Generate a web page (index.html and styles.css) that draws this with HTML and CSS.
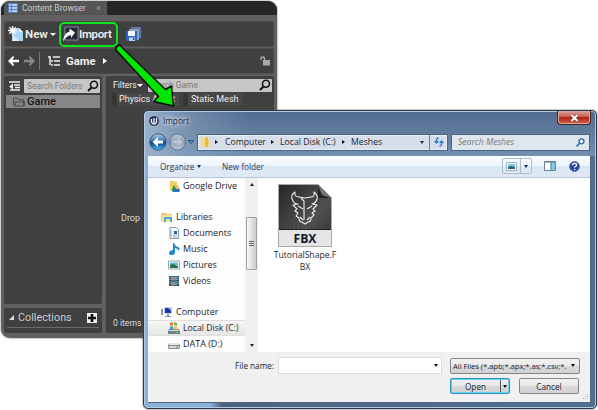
FILE: index.html
```html
<!DOCTYPE html>
<html lang="en">
<head>
<meta charset="utf-8">
<title>Import</title>
<link rel="stylesheet" href="styles.css">
</head>
<body>
<main class="desktop">
<section class="browser">
  <header class="tabs"><div class="tab">
    <svg width="10" height="10" viewBox="0 0 10 10"><path fill="#527fc5" d="M0 0h10v10H0z"/><path d="M1 2h2M4 2h5M1 5h2M4 5h5M1 8h2M4 8h5" stroke="#d8e8ff" stroke-width="1.400"/></svg>
    <span class="tab-name">Content Browser</span><span class="tab-x">×</span></div></header>
  <div class="bar tools">
    <svg width="16" height="16" viewBox="0 0 16 16"><path d="M4 2h7l4 4v9H4z" fill="#a9d5f5"/><path d="M11 2v4h4z" fill="#e9f7ff"/><path d="M5 15V9l6 6z" fill="#dff1ff"/><path d="M4.500 0v9M0 4.500h9M1.300 1.300l6.400 6.400M7.700 1.300L1.300 7.700" stroke="#fff" stroke-width="1.300"/></svg>
    <b class="new">New</b><i class="tri down"></i>
    <div class="import">
      <svg width="16" height="16" viewBox="0 0 16 16"><path d="M2 1h13v13H2z" fill="#25262f" stroke="#8087b1"/><path d="M0 15.500C.8 9.500 3 6.500 6.500 5.500V2.500L12 6.500l-4 5.500V9C4.500 9.500 2 12 0 15.500z" fill="#fff"/></svg>
      <b>Import</b></div>
    <svg class="save" width="17" height="17" viewBox="0 0 17 17"><path d="M6 1h10v11h-3V5H6z" fill="#65779f"/><path d="M4 3h10v11h-2V6H4z" fill="#8b9dc1"/><path d="M1 5h11v10H2l-1-1z" fill="#2f66bd"/><path d="M3 5h7v5H3z" fill="#f4f8ff"/><path d="M4 11.500h6V15H4z" fill="#c1d2ed"/><path d="M8 12h1.300v2H8z" fill="#234576"/></svg>
  </div>
  <div class="bar nav">
    <svg width="11" height="10" viewBox="0 0 11 10"><path d="M0 5l5-5 1.200 1L4.500 3.700H11v2.600H4.500L6.200 9 5 10z" fill="#fff"/></svg>
    <svg class="fwd" width="11" height="10" viewBox="0 0 11 10"><path d="M11 5L6 0 4.800 1l1.700 2.700H0v2.600h6.500L4.800 9 6 10z" fill="#888"/></svg>
    <i class="rule"></i>
    <svg class="tree" width="12" height="10" viewBox="0 0 12 10"><path d="M0 1h3M5 1h7M2 1v8M3 5h2M6 5h6M3 9h2M6 9h6" fill="none" stroke="#eee" stroke-width="1.500"/></svg>
    <b class="path">Game</b><i class="tri right"></i>
    <svg class="lock" width="11" height="10" viewBox="0 0 11 10"><path d="M3 4h7v5.500H3z" fill="#aaa"/><path d="M4.500 4V2.500Q4.500 1 2.700 1T1 2.500V4" fill="none" stroke="#aaa" stroke-width="1.400"/></svg>
  </div>
  <div class="split">
    <div class="left">
      <div class="sources">
        <div class="search-row">
          <svg width="11" height="10" viewBox="0 0 11 10"><path d="M0 1h11M5 4h6M6 6.500h5M1 9h10" stroke="#eee" stroke-width="1.500"/><path d="M4 2.500v6L0 5.500z" fill="#eee"/></svg>
          <div class="search"><span>Search Folders</span><svg width="12" height="12" viewBox="0 0 12 12"><circle cx="7" cy="4.700" r="3.500" fill="none" stroke="#111" stroke-width="1.600"/><path d="M4.500 7.500L1 11" stroke="#111" stroke-width="2"/></svg></div>
        </div>
        <div class="folder"><svg width="12" height="10" viewBox="0 0 12 10"><path d="M.6 8V1.200h4l1 1.500h5V9H1.500zM2 9V5h9.400v4" fill="none" stroke="#444" stroke-width=".9"/></svg><b>Game</b></div>
      </div>
      <div class="collections"><div class="coll-head"><i class="corner"></i><span>Collections</span><svg width="10" height="10" viewBox="0 0 10 10"><path d="M0 0h10v10H0z" fill="#eee"/><path d="M5 1v8M1 5h8" stroke="#111" stroke-width="2.600"/></svg></div></div>
    </div>
    <div class="assets">
      <div class="filter-row"><span class="filters">Filters</span><i class="tri down"></i>
        <div class="search"><span>Search Game</span><svg width="12" height="12" viewBox="0 0 12 12"><circle cx="7" cy="4.700" r="3.500" fill="none" stroke="#111" stroke-width="1.600"/><path d="M4.500 7.500L1 11" stroke="#111" stroke-width="2"/></svg></div></div>
      <div class="chips"><span class="chip phys">Physics Asset</span><span class="chip">Static Mesh</span></div>
      <div class="drop">Drop</div>
      <div class="items">0 items</div>
    </div>
  </div>
</section>

<svg class="arrow" width="80" height="75" viewBox="110 38 80 75"><path d="M119.500 45L165.500 89.500 171.500 86 173.500 106 153.500 101.500 158.500 96.500 115.500 49.500Q116 46 119.500 45z" fill="#00e600" stroke="#071007" stroke-width="1.500" stroke-linejoin="round"/></svg>

<section class="dialog">
  <header class="title">
    <svg width="10" height="10" viewBox="0 0 10 10"><circle cx="5" cy="5" r="4.800" fill="#1b2952"/><path d="M2.500 3v3Q3 8 5 8t2.500-2V2M5 2v5" fill="none" stroke="#fff" stroke-width="1.300"/></svg>
    <span>Import</span>
    <div class="close"><svg width="9" height="8" viewBox="0 0 9 8"><path d="M1.500 1l6 6M7.500 1l-6 6" stroke="#5b3333" stroke-width="3.200"/><path d="M1.500 1l6 6M7.500 1l-6 6" stroke="#fff" stroke-width="2"/></svg></div>
  </header>
  <div class="address-row">
    <svg class="back" width="46" height="18" viewBox="0 0 46 18"><defs><linearGradient id="blue" x2="0" y2="1"><stop stop-color="#b7d8f0"/><stop offset=".48" stop-color="#2763a8"/><stop offset=".55" stop-color="#0b438e"/><stop offset="1" stop-color="#4cc4f4"/></linearGradient><linearGradient id="grey" x2="0" y2="1"><stop stop-color="#c2ccd8"/><stop offset=".5" stop-color="#8d9eb2"/><stop offset="1" stop-color="#bdcad8"/></linearGradient></defs><circle cx="9" cy="9" r="8.200" fill="url(#blue)" stroke="#3b5878"/><path d="M3.500 9L9 4v3.500h5v3H9V14z" fill="#fff"/><circle cx="28.500" cy="9" r="8" fill="url(#grey)" stroke="#60738a"/><path d="M34 9l-5.500-4.500v3h-5v3h5v3z" fill="#b9c5d1"/><path d="M39.500 7.500h5L42 10.500z" fill="#42a2dc" stroke="#164774" stroke-width=".8"/></svg>
    <div class="address">
      <svg width="11" height="12" viewBox="0 0 11 12"><path d="M1 1h5v10H1z" fill="#f8dc80"/><path d="M5 2l3-1v10H5z" fill="#e3b84e"/><path d="M8 3h2v8H8z" fill="#f4d983"/></svg>
      <i class="crumb c1"></i><span class="t-comp">Computer</span><i class="crumb c2"></i><span class="t-local">Local Disk (C:)</span><i class="crumb c3"></i><span class="t-mesh">Meshes</span><i class="small-down"></i>
      <div class="refresh"><svg width="10" height="10" viewBox="0 0 10 10"><path d="M4.500 1Q2 1 2.500 5M5.500 9Q8 9 7.500 5" fill="none" stroke="#2574c8" stroke-width="1.400"/><path d="M0 4h5L2.500 7zM5 6h5L7.500 3z" fill="#2574c8"/></svg></div>
    </div>
    <div class="find"><em>Search Meshes</em><svg width="9" height="9" viewBox="0 0 9 9"><circle cx="5.500" cy="3.300" r="2.500" fill="#e7f3ff" stroke="#2869b0" stroke-width="1.300"/><path d="M3.700 5.200L.5 8.500" stroke="#2869b0" stroke-width="1.600"/></svg></div>
  </div>
  <div class="content">
    <div class="commands"><span class="org">Organize</span><i class="small-down"></i><span class="newf">New folder</span>
      <div class="view"><div><svg width="11" height="9" viewBox="0 0 11 9"><path d="M.5.5h10v8H.5z" fill="#fff" stroke="#a4b3c0"/><path d="M2 2h7v3H2z" fill="#80c4ed"/><path d="M2 5l3-1 4 1v2H2z" fill="#286c6a"/></svg></div><div class="view-more"><i class="small-down"></i></div></div>
      <svg class="pane" width="12" height="10" viewBox="0 0 12 10"><path d="M.5.5h11v9H.5z" fill="#fff" stroke="#6d8193"/><path d="M7 1h4v8H7z" fill="#7bcae8"/><path d="M1 1h10M7 1v8" stroke="#5d7890"/></svg>
      <svg class="help" width="11" height="11" viewBox="0 0 11 11"><circle cx="5.500" cy="5.500" r="5" fill="#2545a7" stroke="#717d99"/><path d="M3.600 4.200q0-1.900 2-1.900t2 1.600q0 .9-1.100 1.400t-.9 1.400M5.600 7.700V9" fill="none" stroke="#fff" stroke-width="1.300"/></svg>
    </div>
    <div class="body">
      <nav class="places">
        <div class="place sub"><svg viewBox="0 0 12 12"><path d="M2 1h4l1 1h2v9H2z" fill="#f2cf65"/><path d="M6 5h3l3 5-1 2H5L4 10z" fill="#2670d0"/><path d="M6 5l2 3-3 4-1-2z" fill="#249447"/><path d="M6 5h3l2 4H8z" fill="#f4c536"/></svg><span>Google Drive</span></div>
        <div class="place"></div>
        <div class="place"><svg viewBox="0 0 12 12"><path d="M0 2h5l1 1h5v7H0z" fill="#eccb6b"/><path d="M1 4h10v7H1z" fill="#f8e198"/><path d="M3 11V6h8v5H9V8H5v3z" fill="#4ba5d5"/></svg><span>Libraries</span></div>
        <div class="place sub"><svg viewBox="0 0 12 12"><path d="M2 .5h6L10.500 3v8.500H2z" fill="#f5f8fb" stroke="#8b9da9"/><path d="M3 3v7M5 8h4M5 10h4" stroke="#91adc1"/><path d="M6 4h3v3H6z" fill="#2b65a5"/></svg><span>Documents</span></div>
        <div class="place sub"><svg viewBox="0 0 12 12"><path d="M6 0q1 3 4 4t0 4q1-2-3-3v4q0 3-3 3t-3-2 3-3h1V0z" fill="#2388cb"/></svg><span>Music</span></div>
        <div class="place sub"><svg viewBox="0 0 12 12"><path d="M.5 2h11v8H.5z" fill="#fff" stroke="#96a5ac"/><path d="M2 3.500h8V6H2z" fill="#5cbae8"/><path d="M2 6l3-1 5 2v2H2z" fill="#257348"/></svg><span>Pictures</span></div>
        <div class="place sub"><svg viewBox="0 0 12 12"><path d="M1 1h10v10H1z" fill="#35424d"/><path d="M3 1.500h6v4H3zM3 6.500h6v4H3z" fill="#55a5cc"/><path d="M4 4l2-2 2 3zM4 9l3-2 2 3z" fill="#c97855"/><path d="M2 2v8M10 2v8" stroke="#ddd" stroke-dasharray="1 1"/></svg><span>Videos</span></div>
        <div class="place"></div>
        <div class="place"><svg viewBox="0 0 12 12"><path d="M0 3h2v6H0z" fill="#8b98ae"/><path d="M3 1h8v7H3z" fill="#d0d8e7"/><path d="M4 2h6v5H4z" fill="#202eb5"/><path d="M7 2h3v3z" fill="#6bade7"/><path d="M6 8h2v2H6zM4 10h6v1H4z" fill="#8998ac"/></svg><span>Computer</span></div>
        <div class="place sub selected"><svg viewBox="0 0 12 12"><path d="M1 7h9l2 2v3H0V9z" fill="#6e818a"/><path d="M1 8h9l1 1H0z" fill="#d6e0e2"/><path d="M2 1l3-1v3L2 4z" fill="#e27039"/><path d="M6 0l3 1v3L6 3z" fill="#78b941"/><path d="M2 5l3-1v3L2 8z" fill="#3d8ed6"/><path d="M6 4l3 1v3L6 7z" fill="#efbe3a"/><path d="M8 10h2v1H8z" fill="#60e55c"/></svg><span class="tight">Local Disk (C:)</span></div>
        <div class="place sub"><svg viewBox="0 0 12 12"><path d="M2 5h8l2 2v3l-1 1H1l-1-1V7z" fill="#8a8f91"/><path d="M2 5h8l1 2H1z" fill="#e5e8e8"/><path d="M1 8h10v2H1z" fill="#d7dada"/><path d="M8 8.500h2v1H8z" fill="#46a63b"/></svg><span>DATA (D:)</span></div>
      </nav>
      <div class="scroll"><i class="s-up"></i><div class="thumb"><i></i><i></i><i></i></div><i class="small-down s-down"></i></div>
      <div class="files"><div class="file">
        <svg width="54" height="63" viewBox="0 0 54 63"><defs><linearGradient id="page" x2="1" y2="1"><stop stop-color="#272727"/><stop offset=".6" stop-color="#505050"/><stop offset="1" stop-color="#303030"/></linearGradient></defs><path d="M.5.500H40L53.500 14V62.500H.5z" fill="url(#page)" stroke="#a9a9a9"/><path d="M40 1v13h13z" fill="#262626"/><path d="M40 1l13 13-9-3z" fill="#777"/><path d="M1 46h52v16H1z" fill="#e5e5e5"/><path d="M1 45.500h52" stroke="#111" stroke-dasharray="3 1"/><path d="M17 8Q12 11 14.500 16T20 20L15 21 19 25 17 27 20 29 18 32 21 34Q21 38 24 38L27 40 30 38Q33 38 33 34L36 31 34 29 37 27 35 25 39 21 34 20Q38 19 39 15T36 8Q37 13 33 13L27 14 21 13Q16 13 17 8zM23 14L26 17V36M20 22L25 25M34 22L29 25M22 33L25 36M32 33L29 36" fill="none" stroke="#eee" stroke-width="1.100" stroke-linejoin="round"/><text x="27" y="58.500" text-anchor="middle" textLength="23" lengthAdjust="spacingAndGlyphs" class="fbx">FBX</text></svg>
        <span class="f1">TutorialShape.F</span><span class="f2">BX</span></div></div>
    </div>
    <div class="footer">
      <div class="name-row"><span class="label">File name:</span><div class="name"><i class="small-down"></i></div><div class="button types"><span>All Files (*.apb;*.apx;*.as;*.csv;*.</span><i class="small-down"></i></div></div>
      <div class="button-row"><div class="button open"><span>Open</span><div class="open-more"><i class="small-down"></i></div></div><div class="button cancel"><span>Cancel</span></div></div>
      <svg class="grip" width="7" height="7" viewBox="0 0 7 7"><path d="M5 0h1v1H5zM3 2h1v1H3zM5 2h1v1H5zM1 4h1v1H1zM3 4h1v1H3zM5 4h1v1H5z" fill="#b2b2b2"/></svg>
    </div>
  </div>
</section>
</main>
</body>
</html>
```
FILE: styles.css
```css
* { box-sizing: border-box; }
body { margin: 0; background: #fff; font-family: "Open Sans", sans-serif; font-size: 9px; color: #222; }
.desktop { position: relative; width: 598px; height: 410px; overflow: hidden; }
svg { display: block; flex: none; }
span, b, em { white-space: nowrap; }
i { flex: none; }

/* Content browser */
.browser { position: absolute; left: 1px; top: 1px; width: 276px; height: 337px; padding: 0 3px 5px; display: flex; flex-direction: column; background: #606060; border-radius: 9px; overflow: hidden; box-shadow: 0 0 2px #555; color: #eee; font-family: Roboto, sans-serif; }
.tabs { height: 14px; margin: 0 -3px; padding-left: 3px; background: #262626; flex: none; }
.tab { width: 103px; height: 14px; background: #555; display: flex; align-items: center; padding-left: 4px; }
.tab-name { margin-left: 4px; width: 74px; font-size: 8.6px; color: #ccc; }
.tab-x { color: #999; font-size: 9px; }
.bar { background: #404040; border: 1px solid #4c4c4c; border-radius: 2px; display: flex; align-items: center; flex: none; }
.tools { height: 26px; margin-top: 6px; padding-left: 3px; }
.new { font-size: 11.5px; font-weight: 600; margin-left: 1px; width: 25px; }
.tri { width: 0; height: 0; border: 3px solid transparent; }
.tri.down { border-top-color: #fff; border-bottom: 0; }
.tri.right { border-left: 4px solid #fff; border-right: 0; }
.import { height: 25px; width: 59px; flex: none; margin-left: 3px; padding-left: 2px; border: 2px solid #0ce61c; border-radius: 5px; box-shadow: 0 0 1px #000; display: flex; align-items: center; gap: 0; }
.import b { font-size: 11.5px; font-weight: 600; letter-spacing: -.35px; }
.save { margin-left: 7px; }
.nav { height: 26px; margin-top: 1px; padding: 0 2px 0 3px; }
.fwd { margin-left: 5px; }
.rule { width: 1px; height: 18px; background: #777; margin-left: 4px; }
.tree { margin-left: 8px; }
.path { font-size: 11.3px; margin-left: 6px; width: 37px; }
.lock { margin-left: auto; }
.split { flex: 1; min-height: 0; margin-top: 2px; display: flex; gap: 4px; }
.left { width: 98px; display: flex; flex-direction: column; gap: 4px; }
.sources { flex: 1; background: #404040; border-radius: 2px; padding: 2px; }
.search-row { display: flex; align-items: center; gap: 4px; padding-left: 3px; height: 16px; }
.search { height: 14px; flex: 1; background: #c6c6c6; border-radius: 1px; display: flex; align-items: center; justify-content: space-between; padding: 0 1px 0 3px; color: #7b7b7b; font-size: 8.4px; }
.folder { height: 13px; margin-top: 1px; background: #868686; color: #161616; display: flex; align-items: center; padding-left: 7px; gap: 2px; font-size: 11px; }
.folder b { font-weight: 500; }
.collections { height: 25px; background: #404040; border-radius: 2px; padding: 0 3px; }
.coll-head { height: 20px; border-bottom: 1px solid #6b6b6b; display: flex; align-items: center; font-size: 10.8px; color: #ccc; }
.corner { width: 0; height: 0; border-left: 5px solid transparent; border-bottom: 5px solid #ddd; margin: 0 4px 0 2px; }
.coll-head svg { margin: 1px 2px 0 auto; }
.assets { flex: 1; background: #404040; border-radius: 2px; padding: 2px; display: flex; flex-direction: column; }
.filter-row { height: 14px; display: flex; align-items: center; padding-left: 5px; }
.filters { font-size: 8.6px; width: 24px; }
.filter-row .search { margin-left: 5px; height: 13px; padding-left: 0; }
.chips { display: flex; gap: 4px; margin: 1px 0 0 4px; }
.chip { height: 13px; line-height: 13px; padding: 0 3px 0 3px; background: #484848; border-left: 5px solid #353535; border-radius: 1px; font-size: 9px; }
.phys { width: 67px; padding-left: 2px; }
.drop { padding-left: 13px; margin: 107px 0 auto; font-size: 9px; color: #ddd; }
.items { padding: 0 0 3px 5px; font-size: 8.6px; color: #ddd; }
.arrow { position: absolute; left: 110px; top: 38px; }

/* Import dialog */
.dialog { position: absolute; left: 143px; top: 110px; width: 454px; height: 299px; display: flex; flex-direction: column; padding: 0 5px 5px 4px; border: 1px solid #29374a; border-radius: 5px; box-shadow: inset 0 0 0 1px #b3c9df, 0 0 2px #555; background: linear-gradient(90deg, #9cb1cb 0, #8ba3c188 45px, transparent 110px) top/100% 45px no-repeat, linear-gradient(#4e6b90, #68809f 28px, #7190b4 45px) top/100% 45px no-repeat, linear-gradient(90deg, #89b0da 0 66px, #4c6481 78px, #526f92); color: #1f2428; }
.title { height: 19px; display: flex; align-items: center; padding-left: 1px; gap: 4px; flex: none; }
.title span { font-size: 8.2px; text-shadow: 0 0 5px #fff, 0 0 5px #fff; }
.close { margin-left: auto; align-self: flex-start; width: 34px; height: 14px; display: flex; align-items: center; justify-content: center; border: 1px solid #45242c; border-top: 0; border-radius: 0 0 4px 4px; background: linear-gradient(#dba196, #c75c4b 47%, #ad2316 50%, #d6644c); box-shadow: inset 0 0 0 1px #dfa69c; }
.address-row { height: 26px; display: flex; align-items: center; flex: none; padding: 0 1px 2px; }
.address { height: 17px; width: 251px; margin-left: 2px; display: flex; align-items: center; padding-left: 2px; background: #d5deea; border: 1px solid #4b6482; box-shadow: inset 0 0 0 1px #e7edf5; font-size: 8.7px; }
.crumb { width: 0; height: 0; border: 2.5px solid transparent; border-left: 3px solid #111; border-right: 0; }
.c1 { margin: 0 7px 0 4px; }
.c2, .c3 { margin-right: 6px; }
.t-comp { width: 46px; } .t-local { width: 62px; } .t-mesh { width: 69px; }
.small-down { width: 0; height: 0; border: 2.5px solid transparent; border-top: 3px solid #172b50; border-bottom: 0; }
.refresh { width: 18px; height: 15px; border-left: 1px solid #71859c; margin-left: auto; display: flex; align-items: center; justify-content: center; }
.find { height: 17px; flex: 1; margin-left: 3px; padding: 0 4px 0 6px; background: #e0e6ee; border: 1px solid #4b6482; display: flex; align-items: center; justify-content: space-between; color: #777; font-size: 8.6px; }
.content { flex: 1; min-height: 0; display: flex; flex-direction: column; border: 1px solid #52677f; border-width: 0 1px 1px 0; background: #f0f0f0; }
.commands { height: 22px; padding-bottom: 1px; background: linear-gradient(#fafcff, #edf4fc 48%, #dce7f5 50%, #dfe9f6); border-bottom: 1px solid #b6c5d8; display: flex; align-items: center; padding-left: 12px; color: #1e395b; flex: none; }
.org { width: 37px; font-size: 8.2px; } .newf { margin-left: 21px; font-size: 8.2px; }
.view { display: flex; width: 30px; height: 16px; border: 1px solid #aebccc; border-radius: 2px; margin-left: auto; }
.view > div { width: 18px; display: flex; align-items: center; justify-content: center; }
.view .view-more { width: 11px; border-left: 1px solid #aebccc; }
.pane { margin-left: 12px; } .help { margin: 0 10px 0 13px; }
.body { height: 174px; display: flex; background: #fff; flex: none; }
.places { width: 97px; background: #fdfdfd; flex: none; }
.place { height: 15.8px; padding-left: 13px; display: flex; align-items: center; gap: 3px; }
.place svg { width: 12px; height: 12px; }
.place span { position: relative; top: -.5px; }
.place.sub { padding-left: 20px; }
.tight { font-size: 8.7px; }
.selected { background: linear-gradient(#f6f6f6, #e5e5e5); border: 1px solid #dedede; border-width: 1px 0; }
.scroll { width: 13px; background: #f0f0f0; display: flex; flex-direction: column; align-items: center; flex: none; }
.s-up { width: 0; height: 0; border: 2.5px solid transparent; border-bottom: 3px solid #222; border-top: 0; margin-top: 5px; }
.thumb { width: 11px; height: 53px; margin-top: 31px; border: 1px solid #a2a2a2; border-radius: 1px; background: linear-gradient(90deg, #f8f8f8, #ccc); display: flex; flex-direction: column; align-items: center; justify-content: center; gap: 1px; }
.thumb i { width: 5px; height: 1px; background: #666; }
.s-down { margin: auto 0 5px; }
.files { flex: 1; padding: 6px 0 0 15px; background: #fff; }
.file { width: 64px; display: flex; flex-direction: column; align-items: center; line-height: 12px; font-size: 8.6px; }
.file svg { margin-bottom: 2px; }
.fbx { font: bold 13px "Open Sans", sans-serif; fill: #111827; }
.footer { flex: 1; position: relative; padding-top: 5px; }
.name-row, .button-row { display: flex; align-items: center; }
.label { width: 130px; padding-right: 4px; text-align: right; font-size: 8.2px; }
.name { width: 164px; height: 17px; background: #fff; border: 1px solid #d9dce1; display: flex; align-items: center; justify-content: flex-end; padding-right: 3px; }
.button { height: 16px; border: 1px solid #858585; border-radius: 2px; background: linear-gradient(#f2f2f2, #e8e8e8 48%, #dadada 50%, #d1d1d1); display: flex; align-items: center; font-size: 8.2px; }
.footer .small-down { border-top-color: #111; }
.types { width: 130px; margin-left: 8px; padding: 0 4px 0 2px; justify-content: space-between; font-size: 7.8px; }
.types span { letter-spacing: -.12px; }
.button-row { margin: 4px 0 0 302px; gap: 9px; }
.open { width: 60px; border-color: #2b93bd; box-shadow: inset 0 0 0 1px #6bd1f1; padding-left: 14px; }
.open-more { width: 9px; height: 12px; border-left: 1px solid #555; margin-left: auto; display: flex; align-items: center; justify-content: center; }
.cancel { width: 60px; justify-content: center; }
.grip { position: absolute; right: 1px; bottom: 1px; }
```
